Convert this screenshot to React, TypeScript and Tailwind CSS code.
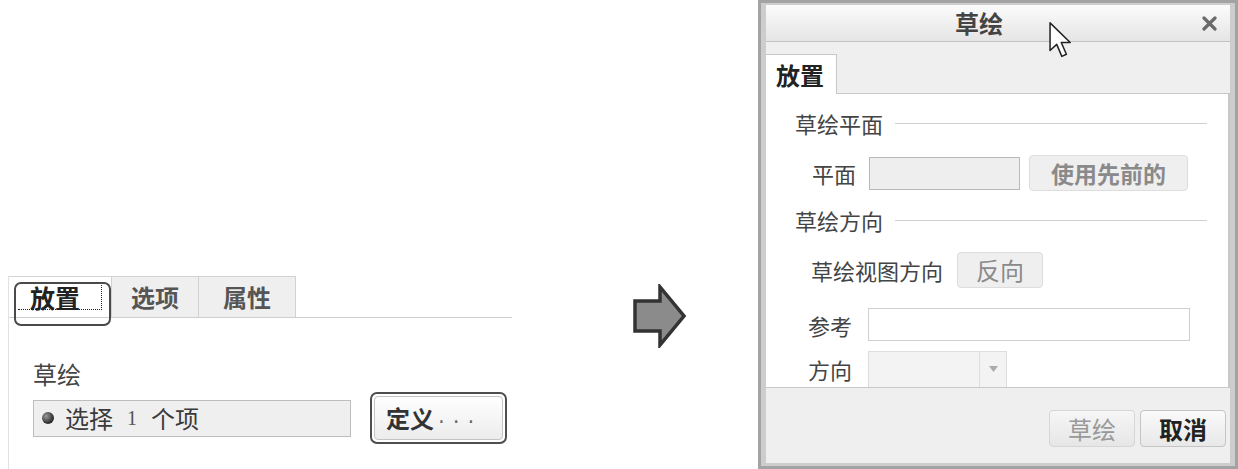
import React from 'react';

const CJK = "font-['Noto_Sans_CJK_SC','Noto_Sans',sans-serif]";

function PlacementPanel() {
  return (
    <div className="ml-[8px] mt-[276px] w-[504px] border-l border-[#e2e2e2] flex flex-col">
      {/* tabs */}
      <div className="flex h-[42px] border-b border-[#cfcfcf]">
        <div className="relative w-[102px] bg-white border-t border-[#d4d4d4]">
          <div className="absolute left-[5px] top-[5px] w-[97px] h-[44px] rounded-[7px] border-2 border-[#4a4a4a]" />
          <div className="absolute left-[9px] top-[8px] h-[25px] w-[84px] border-b border-r border-dotted border-[#222] flex items-center pl-[12px]">
            <span className="text-[25px] leading-none font-bold text-[#222]">放置</span>
          </div>
        </div>
        <div className="w-[88px] bg-[#efefef] border border-b-0 border-[#d2d2d2] flex items-center justify-center">
          <span className="text-[24px] leading-none font-bold text-[#555]">选项</span>
        </div>
        <div className="w-[97px] bg-[#efefef] border border-l-0 border-b-0 border-[#d2d2d2] flex items-center justify-center">
          <span className="text-[24px] leading-none font-bold text-[#555]">属性</span>
        </div>
      </div>

      <div className="pl-[24px] pt-[44px]">
        <div className="text-[24px] leading-none text-[#444]">草绘</div>
        <div className="flex items-center mt-[6px]">
          <div className="w-[318px] h-[37px] bg-[#efefef] border border-[#bdbdbd] flex items-center pl-[8px]">
            <span className="shrink-0 w-[12px] h-[12px] rounded-full bg-[radial-gradient(circle_at_35%_35%,#9a9a9a,#2e2e2e_65%)]" />
            <span className="ml-[11px] text-[24px] leading-none text-[#3a3a3a]">选择</span>
            <span className="ml-[14px] text-[20px] leading-none text-[#555] font-['Liberation_Serif',serif]">1</span>
            <span className="ml-[14px] text-[24px] leading-none text-[#3a3a3a]">个项</span>
          </div>
          <div className="ml-[19px] w-[137px] h-[52px] rounded-[7px] border-2 border-[#4e4e4e] p-[2px]">
            <div className="h-full rounded-[4px] border border-[#c4c4c4] bg-gradient-to-b from-white to-[#ececec] flex items-center pl-[11px]">
              <span className="text-[24px] leading-none font-bold text-[#333]">定义</span>
              <span className="ml-[2px] text-[18px] leading-none text-[#666] tracking-[4px] font-['Liberation_Mono',monospace]">...</span>
            </div>
          </div>
        </div>
      </div>
    </div>
  );
}

function BigArrow() {
  return (
    <svg className="ml-[121px] mt-[284px] shrink-0" width="54" height="64" viewBox="0 0 54 64">
      <polygon points="2,17 27,17 27,3 51,32 27,61 27,47 2,47" fill="#8b8b8b" stroke="#333" strokeWidth="3.5" strokeLinejoin="miter" />
    </svg>
  );
}

function SectionHeader({ label }: { label: string }) {
  return (
    <div className="flex items-center pl-[29px] pr-[21px]">
      <span className="text-[22px] leading-none text-[#444]">{label}</span>
      <span className="flex-1 ml-[12px] h-px bg-[#cfcfcf]" />
    </div>
  );
}

function SketchDialog() {
  return (
    <div className="w-[480px] h-[469px] shrink-0 bg-[#a3a3a3] p-[3px]">
      <div className="relative h-full bg-[#cdcdcd] px-[5px] pt-[2px] pb-[3px] flex flex-col">
        {/* title bar */}
        <div className="h-[37px] bg-gradient-to-b from-[#fbfbfb] to-[#e5e5e5] border-b border-[#c2c2c2] flex items-center">
          <span className="flex-1 text-center pr-[10px] text-[24px] leading-none font-bold text-[#444]">草绘</span>
          <svg className="mr-[13px]" width="15" height="15" viewBox="0 0 15 15">
            <path d="M2 2 L13 13 M13 2 L2 13" stroke="#6a6a6a" strokeWidth="3.2" strokeLinecap="round" />
          </svg>
        </div>

        {/* tab strip */}
        <div className="h-[52px] bg-[#efefef] flex items-end border-b border-[#c8c8c8]">
          <div className="w-[71px] h-[40px] -mb-px bg-white border-t border-r border-[#c8c8c8] flex items-center pl-[10px]">
            <span className="text-[24px] leading-none font-bold text-[#222]">放置</span>
          </div>
        </div>

        {/* content */}
        <div className="h-[294px] bg-white border-r-2 border-b border-[#c8c8c8] overflow-hidden pt-[18px] flex flex-col">
          <SectionHeader label="草绘平面" />
          <div className="flex items-center mt-[21px] pl-[46px]">
            <span className="text-[22px] leading-none text-[#444]">平面</span>
            <div className="ml-[13px] w-[151px] h-[33px] bg-[#eeeeee] border border-[#b9b9b9]" />
            <div className="ml-[9px] w-[159px] h-[36px] rounded-[4px] bg-[#efefef] border border-[#dddddd] flex items-center justify-center">
              <span className="text-[23px] leading-none font-bold text-[#8a8a8a]">使用先前的</span>
            </div>
          </div>
          <div className="mt-[18px]">
            <SectionHeader label="草绘方向" />
          </div>
          <div className="flex items-center mt-[21px] pl-[45px]">
            <span className="text-[22px] leading-none text-[#444]">草绘视图方向</span>
            <div className="ml-[14px] w-[86px] h-[36px] rounded-[4px] bg-[#efefef] border border-[#dddddd] flex items-center justify-center">
              <span className="text-[24px] leading-none text-[#8a8a8a]">反向</span>
            </div>
          </div>
          <div className="flex items-center mt-[20px] pl-[42px]">
            <span className="w-[60px] text-[22px] leading-none text-[#444]">参考</span>
            <div className="w-[322px] h-[33px] bg-white border border-[#cfcfcf]" />
          </div>
          <div className="flex items-start mt-[10px] pl-[42px]">
            <span className="w-[60px] mt-[7px] text-[22px] leading-none text-[#444]">方向</span>
            <div className="w-[139px] h-[40px] bg-[#f3f3f3] border border-[#dedede] flex">
              <div className="flex-1" />
              <div className="w-[27px] border-l border-[#dedede] flex justify-center pt-[14px]">
                <svg width="9" height="6" viewBox="0 0 9 6"><polygon points="0,0 9,0 4.5,6" fill="#aaa" /></svg>
              </div>
            </div>
          </div>
        </div>

        {/* footer */}
        <div className="flex-1 bg-[#efefef] flex justify-end items-start pt-[22px] pr-[4px] gap-[5px]">
          <div className="w-[86px] h-[37px] rounded-[4px] bg-gradient-to-b from-[#f6f6f6] to-[#e6e6e6] border border-[#d6d6d6] flex items-center justify-center">
            <span className="text-[24px] leading-none text-[#999]">草绘</span>
          </div>
          <div className="w-[86px] h-[37px] rounded-[4px] bg-gradient-to-b from-[#fafafa] to-[#e8e8e8] border border-[#c4c4c4] flex items-center justify-center">
            <span className="text-[24px] leading-none font-bold text-[#222]">取消</span>
          </div>
        </div>

        {/* mouse pointer over title */}
        <svg className="absolute left-[287px] top-[18px]" width="25" height="38" viewBox="0 0 13 20">
          <path d="M1 1 L1 15.5 L4.5 12.3 L7.2 18.6 L9.6 17.5 L6.9 11.3 L11.6 11.3 Z" fill="white" stroke="#222" strokeWidth="0.8" strokeLinejoin="round" />
        </svg>
      </div>
    </div>
  );
}

export default function App() {
  return (
    <div className={`w-[1238px] h-[469px] bg-white flex overflow-hidden ${CJK}`}>
      <div className="w-[758px] shrink-0 flex">
        <PlacementPanel />
        <BigArrow />
      </div>
      <SketchDialog />
    </div>
  );
}
